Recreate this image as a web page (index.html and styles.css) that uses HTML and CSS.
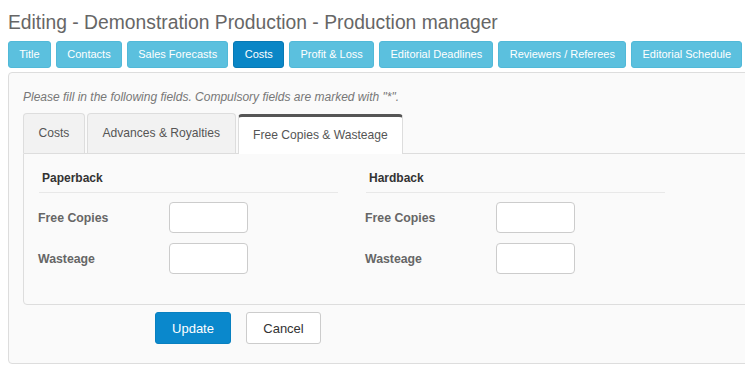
FILE: index.html
```html
<!DOCTYPE html>
<html lang="en">
<head>
  <meta charset="UTF-8" />
  <meta name="viewport" content="width=device-width, initial-scale=1.0" />
  <title>Editing - Demonstration Production</title>
  <link rel="stylesheet" href="styles.css">
</head>
<body>
  <div class="page">
    <h1 class="page-title">Editing - Demonstration Production - Production manager</h1>

    <div class="section-nav">
      <a class="nav-btn" href="#">Title</a>
      <a class="nav-btn" href="#">Contacts</a>
      <a class="nav-btn" href="#">Sales Forecasts</a>
      <a class="nav-btn active" href="#">Costs</a>
      <a class="nav-btn" href="#">Profit &amp; Loss</a>
      <a class="nav-btn" href="#">Editorial Deadlines</a>
      <a class="nav-btn" href="#">Reviewers / Referees</a>
      <a class="nav-btn" href="#">Editorial Schedule</a>
    </div>

    <div class="panel">
      <p class="help">Please fill in the following fields. Compulsory fields are marked with "*".</p>

      <div class="tabs">
        <a class="tab" href="#">Costs</a>
        <a class="tab" href="#">Advances &amp; Royalties</a>
        <a class="tab active" href="#">Free Copies &amp; Wasteage</a>
      </div>

      <div class="tab-content">
        <div class="col">
          <h4 class="col-title">Paperback</h4>
          <div class="row">
            <label for="pbFree">Free Copies</label>
            <input type="text" id="pbFree">
          </div>
          <div class="row">
            <label for="pbWaste">Wasteage</label>
            <input type="text" id="pbWaste">
          </div>
        </div>
        <div class="col">
          <h4 class="col-title">Hardback</h4>
          <div class="row">
            <label for="hbFree">Free Copies</label>
            <input type="text" id="hbFree">
          </div>
          <div class="row">
            <label for="hbWaste">Wasteage</label>
            <input type="text" id="hbWaste">
          </div>
        </div>
      </div>

      <div class="actions">
        <button class="btn btn-primary">Update</button>
        <button class="btn btn-default">Cancel</button>
      </div>
    </div>
  </div>
</body>
</html>
```

FILE: styles.css
```css
html, body { overflow: hidden; }
body { margin: 0; padding: 8px; font-family: "Liberation Sans", Arial, sans-serif; background: #fff; color: #333; }
.page { width: 790px; }

.page-title { margin: 3px 0 0; font-size: 19.3px; font-weight: normal; line-height: 24px; color: #666; }

.section-nav { display: flex; gap: 5px; margin-top: 6px; }
.nav-btn { display: block; padding: 0 10.3px; height: 25px; line-height: 25px; font-size: 11px; color: #fff; text-decoration: none; background: #5bc0de; border: 1px solid #51b9d8; border-radius: 3px; }
.nav-btn.active { background: #0a86c6; border-color: #0879b4; }

.panel { margin-top: 4px; padding: 16px 0 19px 14px; background: #fafafa; border: 1px solid #ddd; border-radius: 4px; }
.help { margin: 0 0 7px; font-size: 12px; font-style: italic; line-height: 17px; color: #777; }

.tabs { display: flex; align-items: flex-end; gap: 2px; }
.tab { display: block; height: 39px; line-height: 39px; padding: 0 14.5px; font-size: 12.1px; color: #555; text-decoration: none; background: #f2f2f2; border: 1px solid #ddd; border-bottom: none; border-radius: 4px 4px 0 0; }
.tab.active { background: #fff; color: #555; border-top: 3px solid #555; height: 37px; line-height: 37px; position: relative; top: 1px; }

.tab-content { display: flex; gap: 28px; padding: 16px 0 30px 15px; border: 1px solid #ddd; border-radius: 0 0 0 4px; }
.col { width: 299px; }
.col-title { margin: 0 0 9px; padding: 0 0 5px 3px; font-size: 12px; font-weight: bold; line-height: 17px; color: #333; border-bottom: 1px solid #e8e8e8; }
.row { display: flex; align-items: center; margin-bottom: 10px; }
.row:last-child { margin-bottom: 0; }
.row label { width: 131px; font-size: 12.3px; font-weight: bold; color: #666; margin-left: -1px; }
.row input { box-sizing: border-box; width: 79px; height: 31px; padding: 0 6px; border: 1px solid #ccc; border-radius: 4px; background: #fff; }

.actions { display: flex; gap: 15px; margin-top: 7px; padding-left: 132px; }
.btn { height: 32px; padding: 0 12px; font-family: "Liberation Sans", Arial, sans-serif; font-size: 13px; border-radius: 3px; cursor: pointer; }
.btn-primary { width: 76px; color: #fff; background: #0a88cc; border: 1px solid #0880c0; }
.btn-default { width: 75px; color: #333; background: #fff; border: 1px solid #ccc; }
```
